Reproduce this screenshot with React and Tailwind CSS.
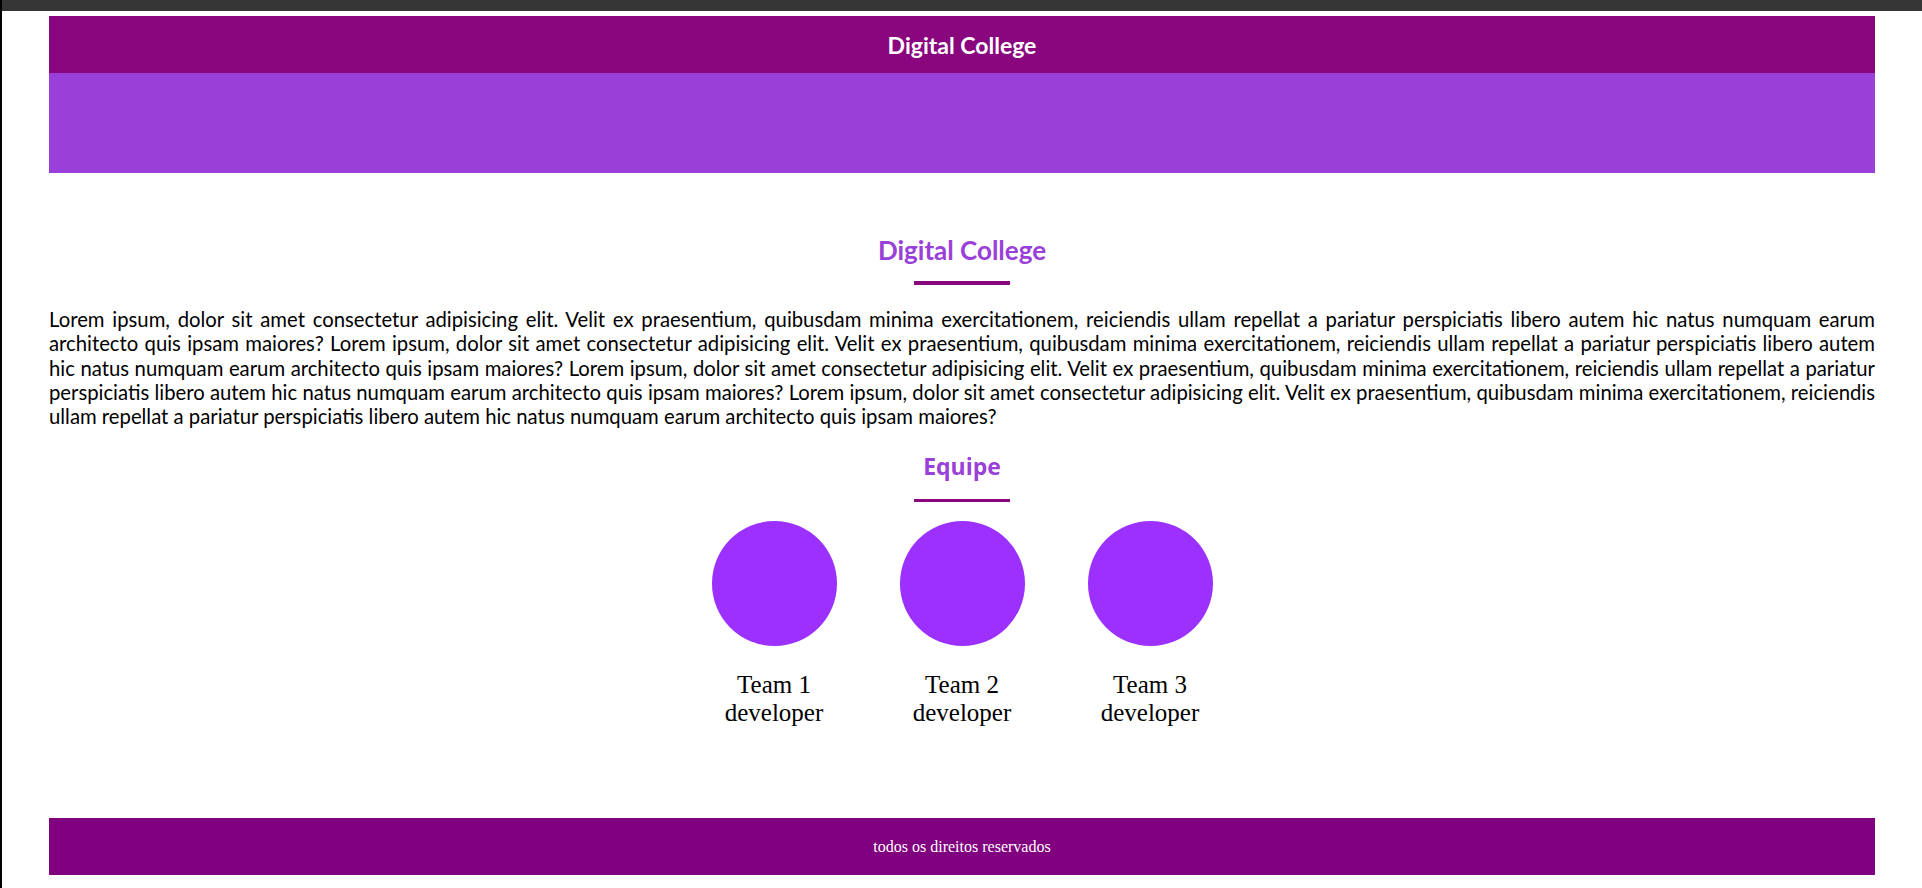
export default function App() {
  const lines = [
    "Lorem ipsum, dolor sit amet consectetur adipisicing elit. Velit ex praesentium, quibusdam minima exercitationem, reiciendis ullam repellat a pariatur perspiciatis libero autem hic natus numquam earum",
    "architecto quis ipsam maiores? Lorem ipsum, dolor sit amet consectetur adipisicing elit. Velit ex praesentium, quibusdam minima exercitationem, reiciendis ullam repellat a pariatur perspiciatis libero autem",
    "hic natus numquam earum architecto quis ipsam maiores? Lorem ipsum, dolor sit amet consectetur adipisicing elit. Velit ex praesentium, quibusdam minima exercitationem, reiciendis ullam repellat a pariatur",
    "perspiciatis libero autem hic natus numquam earum architecto quis ipsam maiores? Lorem ipsum, dolor sit amet consectetur adipisicing elit. Velit ex praesentium, quibusdam minima exercitationem, reiciendis",
  ];
  const lastLine =
    "ullam repellat a pariatur perspiciatis libero autem hic natus numquam earum architecto quis ipsam maiores?";

  const team = ["Team 1", "Team 2", "Team 3"];

  return (
    <div className="min-h-[888px] bg-white border-l-2 border-black flex flex-col">
      <div className="h-[11px] bg-[#363636]" />

      <div className="px-[47px] flex flex-col">
        <header className="mt-[5px] h-[57px] bg-[#8a067e] flex items-center justify-center">
          <h1 className="text-white font-bold text-[23px] leading-[28px] font-['Lato',sans-serif]">
            Digital College
          </h1>
        </header>
        <div className="h-[100px] bg-[#9940d8]" />

        <section className="flex flex-col items-center">
          <h2 className="mt-[62px] text-[#9940d8] font-bold text-[26px] leading-[30px] font-['Lato',sans-serif]">
            Digital College
          </h2>
          <div className="mt-[16px] w-[96px] h-[4px] bg-[#8a067e]" />
        </section>

        <div className="mt-[22px] text-black text-[20.3px] leading-[24.3px] font-['Lato',sans-serif]">
          {lines.map((l, i) => (
            <div key={i} className="text-justify [text-align-last:justify]">
              {l}
            </div>
          ))}
          <div>{lastLine}</div>
        </div>

        <section className="flex flex-col items-center">
          <h2 className="mt-[23px] text-[#9940d8] font-bold text-[23px] leading-[31px] font-['Open_Sans',sans-serif]">
            Equipe
          </h2>
          <div className="mt-[17px] w-[96px] h-[3px] bg-[#8a067e]" />

          <div className="mt-[19px] flex justify-center gap-[63px]">
            {team.map((t) => (
              <div key={t} className="w-[125px] flex flex-col items-center">
                <div className="w-[125px] h-[125px] rounded-full bg-[#9b30ff]" />
                <p className="mt-[25px] text-center text-black text-[25px] leading-[28px] font-['Liberation_Serif',serif]">
                  {t} developer
                </p>
              </div>
            ))}
          </div>
        </section>

        <footer className="mt-[91px] h-[57px] bg-[#800080] flex items-center justify-center">
          <p className="text-white text-[16px] font-['Liberation_Serif',serif]">
            todos os direitos reservados
          </p>
        </footer>
      </div>
    </div>
  );
}
